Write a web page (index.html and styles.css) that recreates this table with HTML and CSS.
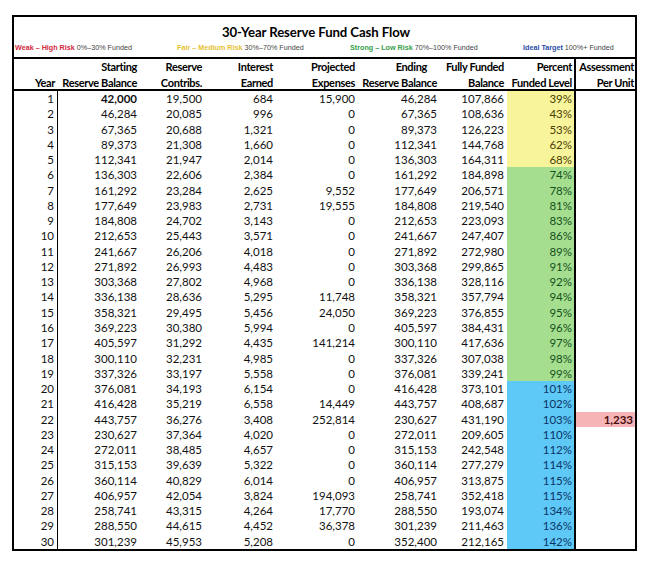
FILE: index.html
```html
<!DOCTYPE html>
<html>
<head>
<meta charset="utf-8">
<link rel="stylesheet" href="styles.css">
</head>
<body>
<div class="sheet">
  <div class="top">
    <div class="title">30-Year Reserve Fund Cash Flow</div>
    <div class="legend">
      <span class="lg lg1"><b class="red">Weak – High Risk</b> 0%–30% Funded</span>
      <span class="lg lg2"><b class="gold">Fair – Medium Risk</b> 30%–70% Funded</span>
      <span class="lg lg3"><b class="grn">Strong – Low Risk</b> 70%–100% Funded</span>
      <span class="lg lg4"><b class="blu">Ideal Target</b> 100%+ Funded</span>
    </div>
  </div>
  <div class="head row-grid">
    <div class="h"><br>Year</div>
    <div class="h">Starting<br>Reserve Balance</div>
    <div class="h">Reserve<br>Contribs.</div>
    <div class="h">Interest<br>Earned</div>
    <div class="h">Projected<br>Expenses</div>
    <div class="h"><span class="ending">Ending</span><br>Reserve Balance</div>
    <div class="h">Fully Funded<br>Balance</div>
    <div class="h pc">Percent<br>Funded Level</div>
    <div class="h">Assessment<br>Per Unit</div>
  </div>
  <div class="body">
    <div class="row-grid r"><div class="yr">1</div><div class="b">42,000</div><div>19,500</div><div>684</div><div>15,900</div><div>46,284</div><div>107,866</div><div class="pc y">39%</div><div></div></div>
    <div class="row-grid r"><div class="yr">2</div><div>46,284</div><div>20,085</div><div>996</div><div>0</div><div>67,365</div><div>108,636</div><div class="pc y">43%</div><div></div></div>
    <div class="row-grid r"><div class="yr">3</div><div>67,365</div><div>20,688</div><div>1,321</div><div>0</div><div>89,373</div><div>126,223</div><div class="pc y">53%</div><div></div></div>
    <div class="row-grid r"><div class="yr">4</div><div>89,373</div><div>21,308</div><div>1,660</div><div>0</div><div>112,341</div><div>144,768</div><div class="pc y">62%</div><div></div></div>
    <div class="row-grid r"><div class="yr">5</div><div>112,341</div><div>21,947</div><div>2,014</div><div>0</div><div>136,303</div><div>164,311</div><div class="pc y">68%</div><div></div></div>
    <div class="row-grid r"><div class="yr">6</div><div>136,303</div><div>22,606</div><div>2,384</div><div>0</div><div>161,292</div><div>184,898</div><div class="pc g">74%</div><div></div></div>
    <div class="row-grid r"><div class="yr">7</div><div>161,292</div><div>23,284</div><div>2,625</div><div>9,552</div><div>177,649</div><div>206,571</div><div class="pc g">78%</div><div></div></div>
    <div class="row-grid r"><div class="yr">8</div><div>177,649</div><div>23,983</div><div>2,731</div><div>19,555</div><div>184,808</div><div>219,540</div><div class="pc g">81%</div><div></div></div>
    <div class="row-grid r"><div class="yr">9</div><div>184,808</div><div>24,702</div><div>3,143</div><div>0</div><div>212,653</div><div>223,093</div><div class="pc g">83%</div><div></div></div>
    <div class="row-grid r"><div class="yr">10</div><div>212,653</div><div>25,443</div><div>3,571</div><div>0</div><div>241,667</div><div>247,407</div><div class="pc g">86%</div><div></div></div>
    <div class="row-grid r"><div class="yr">11</div><div>241,667</div><div>26,206</div><div>4,018</div><div>0</div><div>271,892</div><div>272,980</div><div class="pc g">89%</div><div></div></div>
    <div class="row-grid r"><div class="yr">12</div><div>271,892</div><div>26,993</div><div>4,483</div><div>0</div><div>303,368</div><div>299,865</div><div class="pc g">91%</div><div></div></div>
    <div class="row-grid r"><div class="yr">13</div><div>303,368</div><div>27,802</div><div>4,968</div><div>0</div><div>336,138</div><div>328,116</div><div class="pc g">92%</div><div></div></div>
    <div class="row-grid r"><div class="yr">14</div><div>336,138</div><div>28,636</div><div>5,295</div><div>11,748</div><div>358,321</div><div>357,794</div><div class="pc g">94%</div><div></div></div>
    <div class="row-grid r"><div class="yr">15</div><div>358,321</div><div>29,495</div><div>5,456</div><div>24,050</div><div>369,223</div><div>376,855</div><div class="pc g">95%</div><div></div></div>
    <div class="row-grid r"><div class="yr">16</div><div>369,223</div><div>30,380</div><div>5,994</div><div>0</div><div>405,597</div><div>384,431</div><div class="pc g">96%</div><div></div></div>
    <div class="row-grid r"><div class="yr">17</div><div>405,597</div><div>31,292</div><div>4,435</div><div>141,214</div><div>300,110</div><div>417,636</div><div class="pc g">97%</div><div></div></div>
    <div class="row-grid r"><div class="yr">18</div><div>300,110</div><div>32,231</div><div>4,985</div><div>0</div><div>337,326</div><div>307,038</div><div class="pc g">98%</div><div></div></div>
    <div class="row-grid r"><div class="yr">19</div><div>337,326</div><div>33,197</div><div>5,558</div><div>0</div><div>376,081</div><div>339,241</div><div class="pc g">99%</div><div></div></div>
    <div class="row-grid r"><div class="yr">20</div><div>376,081</div><div>34,193</div><div>6,154</div><div>0</div><div>416,428</div><div>373,101</div><div class="pc bl">101%</div><div></div></div>
    <div class="row-grid r"><div class="yr">21</div><div>416,428</div><div>35,219</div><div>6,558</div><div>14,449</div><div>443,757</div><div>408,687</div><div class="pc bl">102%</div><div></div></div>
    <div class="row-grid r"><div class="yr">22</div><div>443,757</div><div>36,276</div><div>3,408</div><div>252,814</div><div>230,627</div><div>431,190</div><div class="pc bl">103%</div><div class="assess">1,233</div></div>
    <div class="row-grid r"><div class="yr">23</div><div>230,627</div><div>37,364</div><div>4,020</div><div>0</div><div>272,011</div><div>209,605</div><div class="pc bl">110%</div><div></div></div>
    <div class="row-grid r"><div class="yr">24</div><div>272,011</div><div>38,485</div><div>4,657</div><div>0</div><div>315,153</div><div>242,548</div><div class="pc bl">112%</div><div></div></div>
    <div class="row-grid r"><div class="yr">25</div><div>315,153</div><div>39,639</div><div>5,322</div><div>0</div><div>360,114</div><div>277,279</div><div class="pc bl">114%</div><div></div></div>
    <div class="row-grid r"><div class="yr">26</div><div>360,114</div><div>40,829</div><div>6,014</div><div>0</div><div>406,957</div><div>313,875</div><div class="pc bl">115%</div><div></div></div>
    <div class="row-grid r"><div class="yr">27</div><div>406,957</div><div>42,054</div><div>3,824</div><div>194,093</div><div>258,741</div><div>352,418</div><div class="pc bl">115%</div><div></div></div>
    <div class="row-grid r"><div class="yr">28</div><div>258,741</div><div>43,315</div><div>4,264</div><div>17,770</div><div>288,550</div><div>193,074</div><div class="pc bl">134%</div><div></div></div>
    <div class="row-grid r"><div class="yr">29</div><div>288,550</div><div>44,615</div><div>4,452</div><div>36,378</div><div>301,239</div><div>211,463</div><div class="pc bl">136%</div><div></div></div>
    <div class="row-grid r"><div class="yr">30</div><div>301,239</div><div>45,953</div><div>5,208</div><div>0</div><div>352,400</div><div>212,165</div><div class="pc bl">142%</div><div></div></div>
  </div>
</div>
</body>
</html>
```

FILE: styles.css
```css
* { box-sizing: border-box; }
html, body { margin: 0; padding: 0; background: #fff; }
body { font-family: Lato, "Noto Sans", sans-serif; color: #111; }

.sheet {
  margin: 15px 0 0 12px;
  width: 625px;
  border: 2px solid #000;
}

.top {
  height: 42px;
  border-bottom: 2px solid #000;
  display: flex;
  flex-direction: column;
}
.title {
  font-weight: 700;
  font-size: 13.2px;
  letter-spacing: -0.1px;
  line-height: 18px;
  text-align: center;
  padding: 6px 17px 0 0;
  color: #000;
}
.legend {
  display: flex;
  font-family: "Liberation Sans", Arial, sans-serif;
  font-size: 7.2px;
  line-height: 10px;
  color: #444;
  margin-top: 2px;
  padding-left: 1px;
}
.lg { white-space: nowrap; }
.lg1 { width: 162px; }
.lg2 { width: 173px; }
.lg3 { width: 173px; }
.lg b { font-weight: 700; }
.red { color: #d2283c; }
.gold { color: #e6c233; }
.grn { color: #35a048; }
.blu { color: #2b4ea6; }

.row-grid {
  display: grid;
  grid-template-columns: 44px 82px 65px 71px 82px 82px 67px 69px 59px;
}

.head {
  height: 32px;
  border-bottom: 2px solid #000;
}
.h {
  font-weight: 700;
  font-size: 11px;
  letter-spacing: -0.35px;
  line-height: 15.5px;
  text-align: right;
  padding-right: 3px;
  white-space: nowrap;
  color: #000;
}
.h:last-child { padding-right: 1px; }
.ending { padding-right: 10px; }

.r { height: 15.27px; }
.r > div {
  font-size: 11.5px;
  line-height: 15.27px;
  text-align: right;
  padding-right: 3px;
  white-space: nowrap;
  color: #111;
}
.r > .yr { border-right: 1px solid #000; }
.r > .b { font-weight: 700; }

.pc { border-right: 2px solid #000; padding-right: 2px !important; }
.y { background: #f8f49c; color: #4a4000 !important; }
.g { background: #a5de8f; color: #14501c !important; }
.bl { background: #5ec8f7; color: #0b3566 !important; }
.assess {
  background: #f5b5b6;
  font-weight: 700;
  color: #4a0c0c !important;
  padding-right: 2px !important;
}
```
